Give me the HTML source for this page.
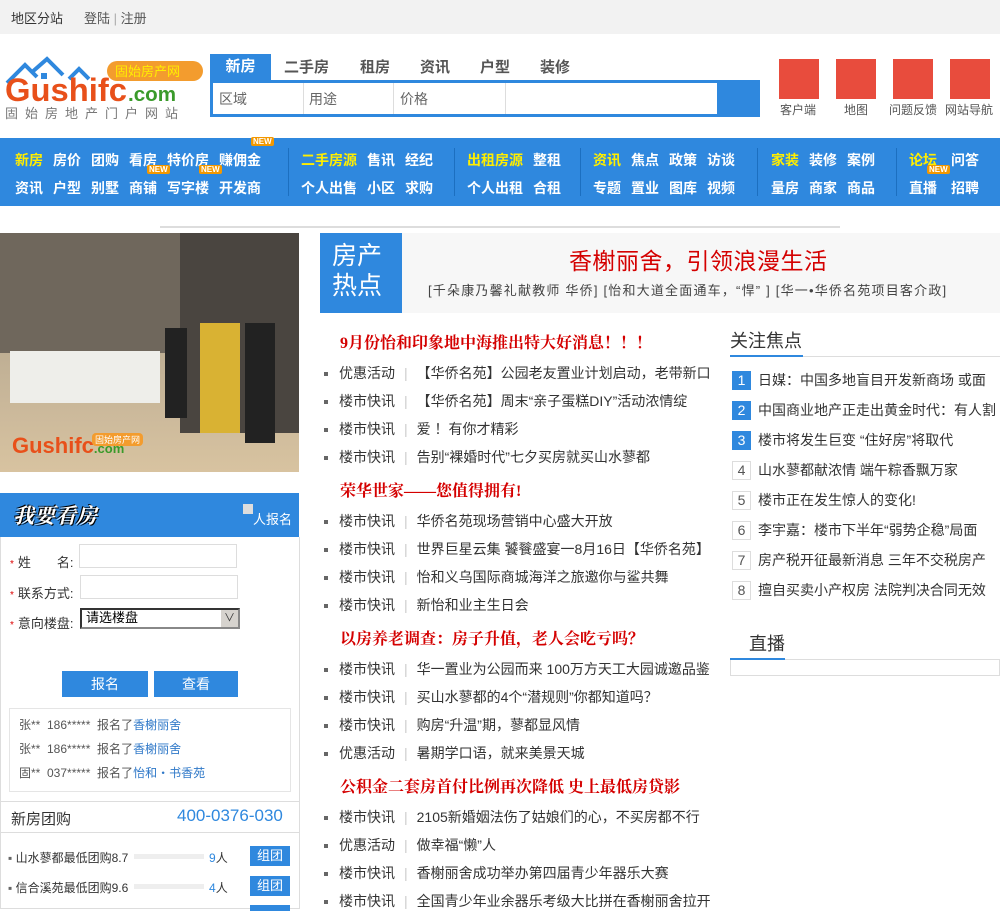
<!DOCTYPE html>
<html><head><meta charset="utf-8">
<style>
*{margin:0;padding:0;box-sizing:border-box}
body{width:1000px;height:909px;overflow:hidden;background:#fff;font-family:"Liberation Sans","Noto Sans CJK SC",sans-serif;font-size:14px;color:#333;position:relative}
.a{position:absolute;white-space:nowrap}
a{color:inherit;text-decoration:none}
.nav span{position:absolute;font-size:14px;font-weight:bold;color:#fff}
.nav .y{color:#ffee00}
.new{position:absolute;background:#f39800;color:#fff;font-size:8px;line-height:9px;padding:0 2px;border-radius:2px;font-weight:bold}
.sep{position:absolute;top:148px;width:1px;height:48px;background:#1c6fc0}
.li{position:absolute;left:324px;font-size:14px;color:#333}
.li i{display:inline-block;width:4px;height:4px;background:#666;margin-right:11px;vertical-align:middle}
.li b{font-weight:normal;color:#ccc;margin:0 9px}
.h{position:absolute;left:340px;font-size:16px;font-weight:bold;color:#d40000;font-family:"Liberation Serif","Noto Serif CJK SC",serif}
.fl{position:absolute;left:732px;font-size:14px}
.fl em{display:inline-block;width:19px;height:19px;border:1px solid #ddd;text-align:center;line-height:17px;font-style:normal;color:#555;margin-right:7px;font-size:14px}
.fl em.b{background:#2f88de;color:#fff;border-color:#2f88de}
.lab{position:absolute;left:10px;font-size:13px}
.lab i{color:#d00;font-style:normal;font-size:10px;margin-right:4px}
</style></head><body>
<div class="a" style="left:0;top:0;width:1000px;height:34px;background:#f2f2f2"></div>
<div class="a" style="left:11px;top:8px;font-size:13px;color:#333">地区分站</div>
<div class="a" style="left:84px;top:8px;font-size:13px;color:#555">登陆 <span style="color:#aaa">|</span> 注册</div>

<!-- logo -->
<svg class="a" style="left:3px;top:55px" width="200" height="66" viewBox="0 0 200 66">
<path d="M4 28 L22 10 L34 22 M28 18 L44 4 L60 20 M66 24 L76 14 L86 24" stroke="#2f88de" stroke-width="4" fill="none"/>
<rect x="38" y="18" width="6" height="6" fill="#2f88de"/>
<rect x="104" y="6" width="96" height="20" rx="10" fill="#f39c2e"/>
<text x="112" y="21" font-size="13" fill="#ffee00" font-family="Noto Sans CJK SC">固始房产网</text>
<text x="2" y="46" font-size="32" font-weight="bold" fill="#e8501a" font-family="Liberation Sans" textLength="122" lengthAdjust="spacingAndGlyphs">Gushifc</text>
<text x="125" y="46" font-size="20" font-weight="bold" fill="#3a9a2a" font-family="Liberation Sans" textLength="48" lengthAdjust="spacingAndGlyphs">.com</text>
<text x="2" y="63" font-size="13" fill="#777" letter-spacing="7" font-family="Noto Sans CJK SC">固始房地产门户网站</text>
</svg>

<!-- search -->
<div class="a" style="left:210px;top:54px;width:61px;height:27px;background:#2f88de;color:#fff;font-size:15px;font-weight:bold;text-align:center;line-height:25px">新房</div>
<div class="a" style="left:284px;top:56px;font-size:15px;font-weight:bold;color:#555">二手房</div>
<div class="a" style="left:360px;top:56px;font-size:15px;font-weight:bold;color:#555">租房</div>
<div class="a" style="left:420px;top:56px;font-size:15px;font-weight:bold;color:#555">资讯</div>
<div class="a" style="left:480px;top:56px;font-size:15px;font-weight:bold;color:#555">户型</div>
<div class="a" style="left:540px;top:56px;font-size:15px;font-weight:bold;color:#555">装修</div>
<div class="a" style="left:210px;top:80px;width:550px;height:37px;background:#2f88de"></div>
<div class="a" style="left:213px;top:83px;width:504px;height:31px;background:#fff"></div>
<div class="a" style="left:303px;top:83px;width:1px;height:31px;background:#ddd"></div>
<div class="a" style="left:393px;top:83px;width:1px;height:31px;background:#ddd"></div>
<div class="a" style="left:505px;top:83px;width:1px;height:31px;background:#ddd"></div>
<div class="a" style="left:219px;top:89px;font-size:14px;color:#666">区域</div>
<div class="a" style="left:309px;top:89px;font-size:14px;color:#666">用途</div>
<div class="a" style="left:400px;top:89px;font-size:14px;color:#666">价格</div>

<div class="a" style="left:779px;top:59px;width:40px;height:40px;background:#e84c3d"></div>
<div class="a" style="left:836px;top:59px;width:40px;height:40px;background:#e84c3d"></div>
<div class="a" style="left:893px;top:59px;width:40px;height:40px;background:#e84c3d"></div>
<div class="a" style="left:950px;top:59px;width:40px;height:40px;background:#e84c3d"></div>
<div class="a" style="left:780px;top:101px;font-size:12px;color:#555">客户端</div>
<div class="a" style="left:844px;top:101px;font-size:12px;color:#555">地图</div>
<div class="a" style="left:889px;top:101px;font-size:12px;color:#555">问题反馈</div>
<div class="a" style="left:945px;top:101px;font-size:12px;color:#555">网站导航</div>

<!-- nav -->
<div class="a nav" style="left:0;top:138px;width:1000px;height:68px;background:#2f88de"></div>
<div class="nav">
<span class="y" style="left:15px;top:150px">新房</span><span style="left:53px;top:150px">房价</span><span style="left:91px;top:150px">团购</span><span style="left:129px;top:150px">看房</span><span style="left:167px;top:150px">特价房</span><span style="left:219px;top:150px">赚佣金</span>
<span style="left:15px;top:178px">资讯</span><span style="left:53px;top:178px">户型</span><span style="left:91px;top:178px">别墅</span><span style="left:129px;top:178px">商铺</span><span style="left:167px;top:178px">写字楼</span><span style="left:219px;top:178px">开发商</span>
<span class="y" style="left:301px;top:150px">二手房源</span><span style="left:367px;top:150px">售讯</span><span style="left:405px;top:150px">经纪</span>
<span style="left:301px;top:178px">个人出售</span><span style="left:367px;top:178px">小区</span><span style="left:405px;top:178px">求购</span>
<span class="y" style="left:467px;top:150px">出租房源</span><span style="left:533px;top:150px">整租</span>
<span style="left:467px;top:178px">个人出租</span><span style="left:533px;top:178px">合租</span>
<span class="y" style="left:593px;top:150px">资讯</span><span style="left:631px;top:150px">焦点</span><span style="left:669px;top:150px">政策</span><span style="left:707px;top:150px">访谈</span>
<span style="left:593px;top:178px">专题</span><span style="left:631px;top:178px">置业</span><span style="left:669px;top:178px">图库</span><span style="left:707px;top:178px">视频</span>
<span class="y" style="left:771px;top:150px">家装</span><span style="left:809px;top:150px">装修</span><span style="left:847px;top:150px">案例</span>
<span style="left:771px;top:178px">量房</span><span style="left:809px;top:178px">商家</span><span style="left:847px;top:178px">商品</span>
<span class="y" style="left:909px;top:150px">论坛</span><span style="left:951px;top:150px">问答</span>
<span style="left:909px;top:178px">直播</span><span style="left:951px;top:178px">招聘</span>
</div>
<div class="new" style="left:251px;top:137px">NEW</div>
<div class="new" style="left:147px;top:165px">NEW</div>
<div class="new" style="left:199px;top:165px">NEW</div>
<div class="new" style="left:927px;top:165px">NEW</div>
<div class="sep" style="left:288px"></div><div class="sep" style="left:454px"></div><div class="sep" style="left:580px"></div><div class="sep" style="left:757px"></div><div class="sep" style="left:896px"></div>

<div class="a" style="left:160px;top:226px;width:680px;height:2px;background:#ddd"></div>

<!-- left photo -->
<div class="a" style="left:0;top:233px;width:299px;height:239px;background:linear-gradient(180deg,#8a7a66 0%,#b7a98f 35%,#c9b79a 70%,#d8c3a0 100%);overflow:hidden">
<div class="a" style="left:0;top:0;width:180px;height:120px;background:#6f675c"></div>
<div class="a" style="left:180px;top:0;width:119px;height:200px;background:#4a4540"></div>
<div class="a" style="left:10px;top:118px;width:150px;height:52px;background:#eeeeea"></div>
<div class="a" style="left:200px;top:90px;width:40px;height:110px;background:#d9b233"></div>
<div class="a" style="left:245px;top:90px;width:30px;height:120px;background:#222"></div>
<div class="a" style="left:165px;top:95px;width:22px;height:90px;background:#222"></div>
<div class="a" style="left:12px;top:200px;font-size:22px;font-weight:bold;color:#e8501a">Gushifc<span style="font-size:13px;color:#3a9a2a">.com</span></div>
<div class="a" style="left:92px;top:200px;font-size:9px;background:#f39c2e;color:#fff;padding:0 3px;border-radius:4px">固始房产网</div>
</div>

<!-- form -->
<div class="a" style="left:0;top:493px;width:299px;height:44px;background:#2f88de"></div>
<div class="a" style="left:13px;top:500px;font-size:21px;font-weight:bold;color:#fff;font-style:italic;font-family:'Noto Serif CJK SC',serif;text-shadow:1px 1px 0 #000,-1px -1px 0 #000">我要看房</div>
<div class="a" style="left:243px;top:504px;width:10px;height:10px;background:#ddd"></div>
<div class="a" style="left:253px;top:509px;font-size:13px;color:#fff">人报名</div>
<div class="a" style="left:0;top:537px;width:300px;height:372px;border:1px solid #ddd;border-top:none"></div>
<div class="lab" style="top:552px"><i>*</i>姓　　名:</div>
<div class="a" style="left:79px;top:544px;width:158px;height:24px;border:1px solid #ddd"></div>
<div class="lab" style="top:583px"><i>*</i>联系方式:</div>
<div class="a" style="left:80px;top:575px;width:158px;height:24px;border:1px solid #ddd"></div>
<div class="lab" style="top:613px"><i>*</i>意向楼盘:</div>
<div class="a" style="left:80px;top:608px;width:160px;height:21px;border:2px inset #888;background:#fff;font-size:13px;color:#000;padding-left:4px;line-height:16px">请选楼盘</div>
<div class="a" style="left:221px;top:610px;width:17px;height:17px;background:#d6d3ce;font-size:11px;text-align:center;line-height:17px">∨</div>
<div class="a" style="left:62px;top:671px;width:86px;height:26px;background:#2f88de;color:#fff;text-align:center;line-height:26px;font-size:14px">报名</div>
<div class="a" style="left:154px;top:671px;width:84px;height:26px;background:#2f88de;color:#fff;text-align:center;line-height:26px;font-size:14px">查看</div>
<div class="a" style="left:9px;top:708px;width:282px;height:84px;border:1px solid #e5e5e5"></div>
<div class="a" style="left:19px;top:716px;font-size:12px;color:#555">张** &nbsp;186***** &nbsp;报名了<span style="color:#2f78c8">香榭丽舍</span></div>
<div class="a" style="left:19px;top:740px;font-size:12px;color:#555">张** &nbsp;186***** &nbsp;报名了<span style="color:#2f78c8">香榭丽舍</span></div>
<div class="a" style="left:19px;top:764px;font-size:12px;color:#555">固** &nbsp;037***** &nbsp;报名了<span style="color:#2f78c8">怡和・书香苑</span></div>
<div class="a" style="left:0;top:801px;width:300px;height:1px;background:#ddd"></div>
<div class="a" style="left:11px;top:808px;font-size:15px;color:#333">新房团购</div>
<div class="a" style="left:177px;top:806px;font-size:17px;color:#2f88de">400-0376-030</div>
<div class="a" style="left:0;top:832px;width:300px;height:1px;background:#ddd"></div>
<div class="a" style="left:8px;top:849px;font-size:12px;color:#333"><span style="color:#666">▪</span> 山水蓼都最低团购8.7</div>
<div class="a" style="left:134px;top:854px;width:70px;height:5px;background:#eee"></div>
<div class="a" style="left:209px;top:849px;font-size:12px"><span style="color:#2f88de">9</span>人</div>
<div class="a" style="left:250px;top:846px;width:40px;height:20px;background:#2f88de;color:#fff;font-size:13px;text-align:center;line-height:20px">组团</div>
<div class="a" style="left:8px;top:879px;font-size:12px;color:#333"><span style="color:#666">▪</span> 信合溪苑最低团购9.6</div>
<div class="a" style="left:134px;top:884px;width:70px;height:5px;background:#eee"></div>
<div class="a" style="left:209px;top:879px;font-size:12px"><span style="color:#2f88de">4</span>人</div>
<div class="a" style="left:250px;top:876px;width:40px;height:20px;background:#2f88de;color:#fff;font-size:13px;text-align:center;line-height:20px">组团</div>
<div class="a" style="left:250px;top:905px;width:40px;height:6px;background:#2f88de"></div>

<!-- hot -->
<div class="a" style="left:320px;top:233px;width:82px;height:80px;background:#2f88de;color:#fff;font-size:25px;line-height:30px;padding:8px 0 0 12px;white-space:normal">房产<br>热点</div>
<div class="a" style="left:402px;top:233px;width:598px;height:80px;background:#f7f7f7"></div>
<div class="a" style="left:569px;top:242px;font-size:23px;color:#d40000;letter-spacing:0.5px">香榭丽舍，引领浪漫生活</div>
<div class="a" style="left:428px;top:280px;font-size:13px;color:#444;letter-spacing:1.2px">[千朵康乃馨礼献教师 华侨] [怡和大道全面通车，“悍” ] [华一•华侨名苑项目客介政]</div>

<div class="h" style="top:330px">9月份怡和印象地中海推出特大好消息！！！</div>
<div class="li" style="top:363px"><i></i>优惠活动<b>|</b>【华侨名苑】公园老友置业计划启动，老带新口</div>
<div class="li" style="top:391px"><i></i>楼市快讯<b>|</b>【华侨名苑】周末“亲子蛋糕DIY”活动浓情绽</div>
<div class="li" style="top:419px"><i></i>楼市快讯<b>|</b>爱 ！有你才精彩</div>
<div class="li" style="top:447px"><i></i>楼市快讯<b>|</b>告别“裸婚时代”七夕买房就买山水蓼都</div>
<div class="h" style="top:478px">荣华世家——您值得拥有!</div>
<div class="li" style="top:511px"><i></i>楼市快讯<b>|</b>华侨名苑现场营销中心盛大开放</div>
<div class="li" style="top:539px"><i></i>楼市快讯<b>|</b>世界巨星云集 饕餮盛宴一8月16日【华侨名苑】</div>
<div class="li" style="top:567px"><i></i>楼市快讯<b>|</b>怡和义乌国际商城海洋之旅邀你与鲨共舞</div>
<div class="li" style="top:595px"><i></i>楼市快讯<b>|</b>新怡和业主生日会</div>
<div class="h" style="top:626px">以房养老调查：房子升值，老人会吃亏吗？</div>
<div class="li" style="top:659px"><i></i>楼市快讯<b>|</b>华一置业为公园而来 100万方天工大园诚邀品鉴</div>
<div class="li" style="top:687px"><i></i>楼市快讯<b>|</b>买山水蓼都的4个“潜规则”你都知道吗？</div>
<div class="li" style="top:715px"><i></i>楼市快讯<b>|</b>购房“升温”期，蓼都显风情</div>
<div class="li" style="top:743px"><i></i>优惠活动<b>|</b>暑期学口语，就来美景天城</div>
<div class="h" style="top:774px">公积金二套房首付比例再次降低 史上最低房贷影</div>
<div class="li" style="top:807px"><i></i>楼市快讯<b>|</b>2105新婚姻法伤了姑娘们的心，不买房都不行</div>
<div class="li" style="top:835px"><i></i>优惠活动<b>|</b>做幸福“懒”人</div>
<div class="li" style="top:863px"><i></i>楼市快讯<b>|</b>香榭丽舍成功举办第四届青少年器乐大赛</div>
<div class="li" style="top:891px"><i></i>楼市快讯<b>|</b>全国青少年业余器乐考级大比拼在香榭丽舍拉开</div>

<!-- right -->
<div class="a" style="left:730px;top:327px;font-size:18px;color:#333">关注焦点</div>
<div class="a" style="left:730px;top:356px;width:270px;height:1px;background:#ddd"></div>
<div class="a" style="left:730px;top:355px;width:73px;height:2px;background:#2f88de"></div>
<div class="fl" style="top:370px"><em class="b">1</em>日媒：中国多地盲目开发新商场 或面</div>
<div class="fl" style="top:400px"><em class="b">2</em>中国商业地产正走出黄金时代：有人割</div>
<div class="fl" style="top:430px"><em class="b">3</em>楼市将发生巨变 “住好房”将取代</div>
<div class="fl" style="top:460px"><em>4</em>山水蓼都献浓情 端午粽香飘万家</div>
<div class="fl" style="top:490px"><em>5</em>楼市正在发生惊人的变化!</div>
<div class="fl" style="top:520px"><em>6</em>李宇嘉：楼市下半年“弱势企稳”局面</div>
<div class="fl" style="top:550px"><em>7</em>房产税开征最新消息 三年不交税房产</div>
<div class="fl" style="top:580px"><em>8</em>擅自买卖小产权房 法院判决合同无效</div>
<div class="a" style="left:749px;top:630px;font-size:18px;color:#333">直播</div>
<div class="a" style="left:730px;top:659px;width:270px;height:17px;border:1px solid #ddd"></div>
<div class="a" style="left:730px;top:658px;width:55px;height:2px;background:#2f88de"></div>
</body></html>
